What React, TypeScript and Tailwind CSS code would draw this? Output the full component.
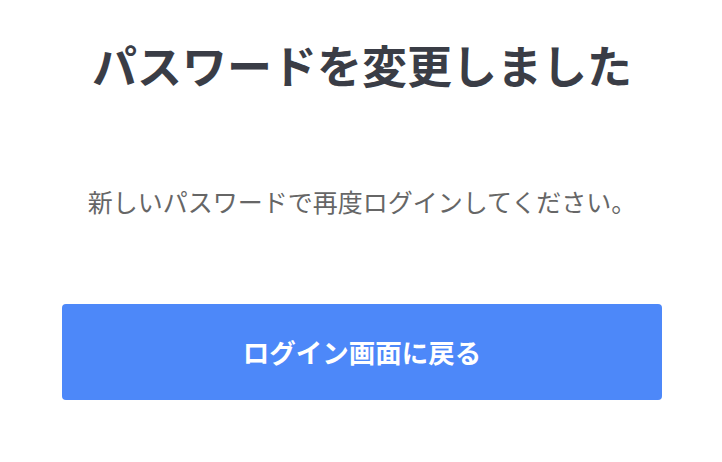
export default function App() {
  return (
    <div
      className="w-full h-[462px] bg-white flex flex-col items-center pl-[2px]"
      style={{ fontFamily: '"Noto Sans CJK JP", "Noto Sans", sans-serif' }}
    >
      <h1 className="mt-[38px] text-[45px] leading-[54px] font-bold text-[#3a3d46]">
        パスワードを変更しました
      </h1>
      <p className="mt-[91px] text-[25px] leading-[36px] text-[#666666]">
        新しいパスワードで再度ログインしてください。
      </p>
      <button className="mt-[85px] w-[600px] h-[96px] rounded-[4px] bg-[#4d88f9] text-white text-[26.5px] font-bold">
        ログイン画面に戻る
      </button>
    </div>
  );
}
